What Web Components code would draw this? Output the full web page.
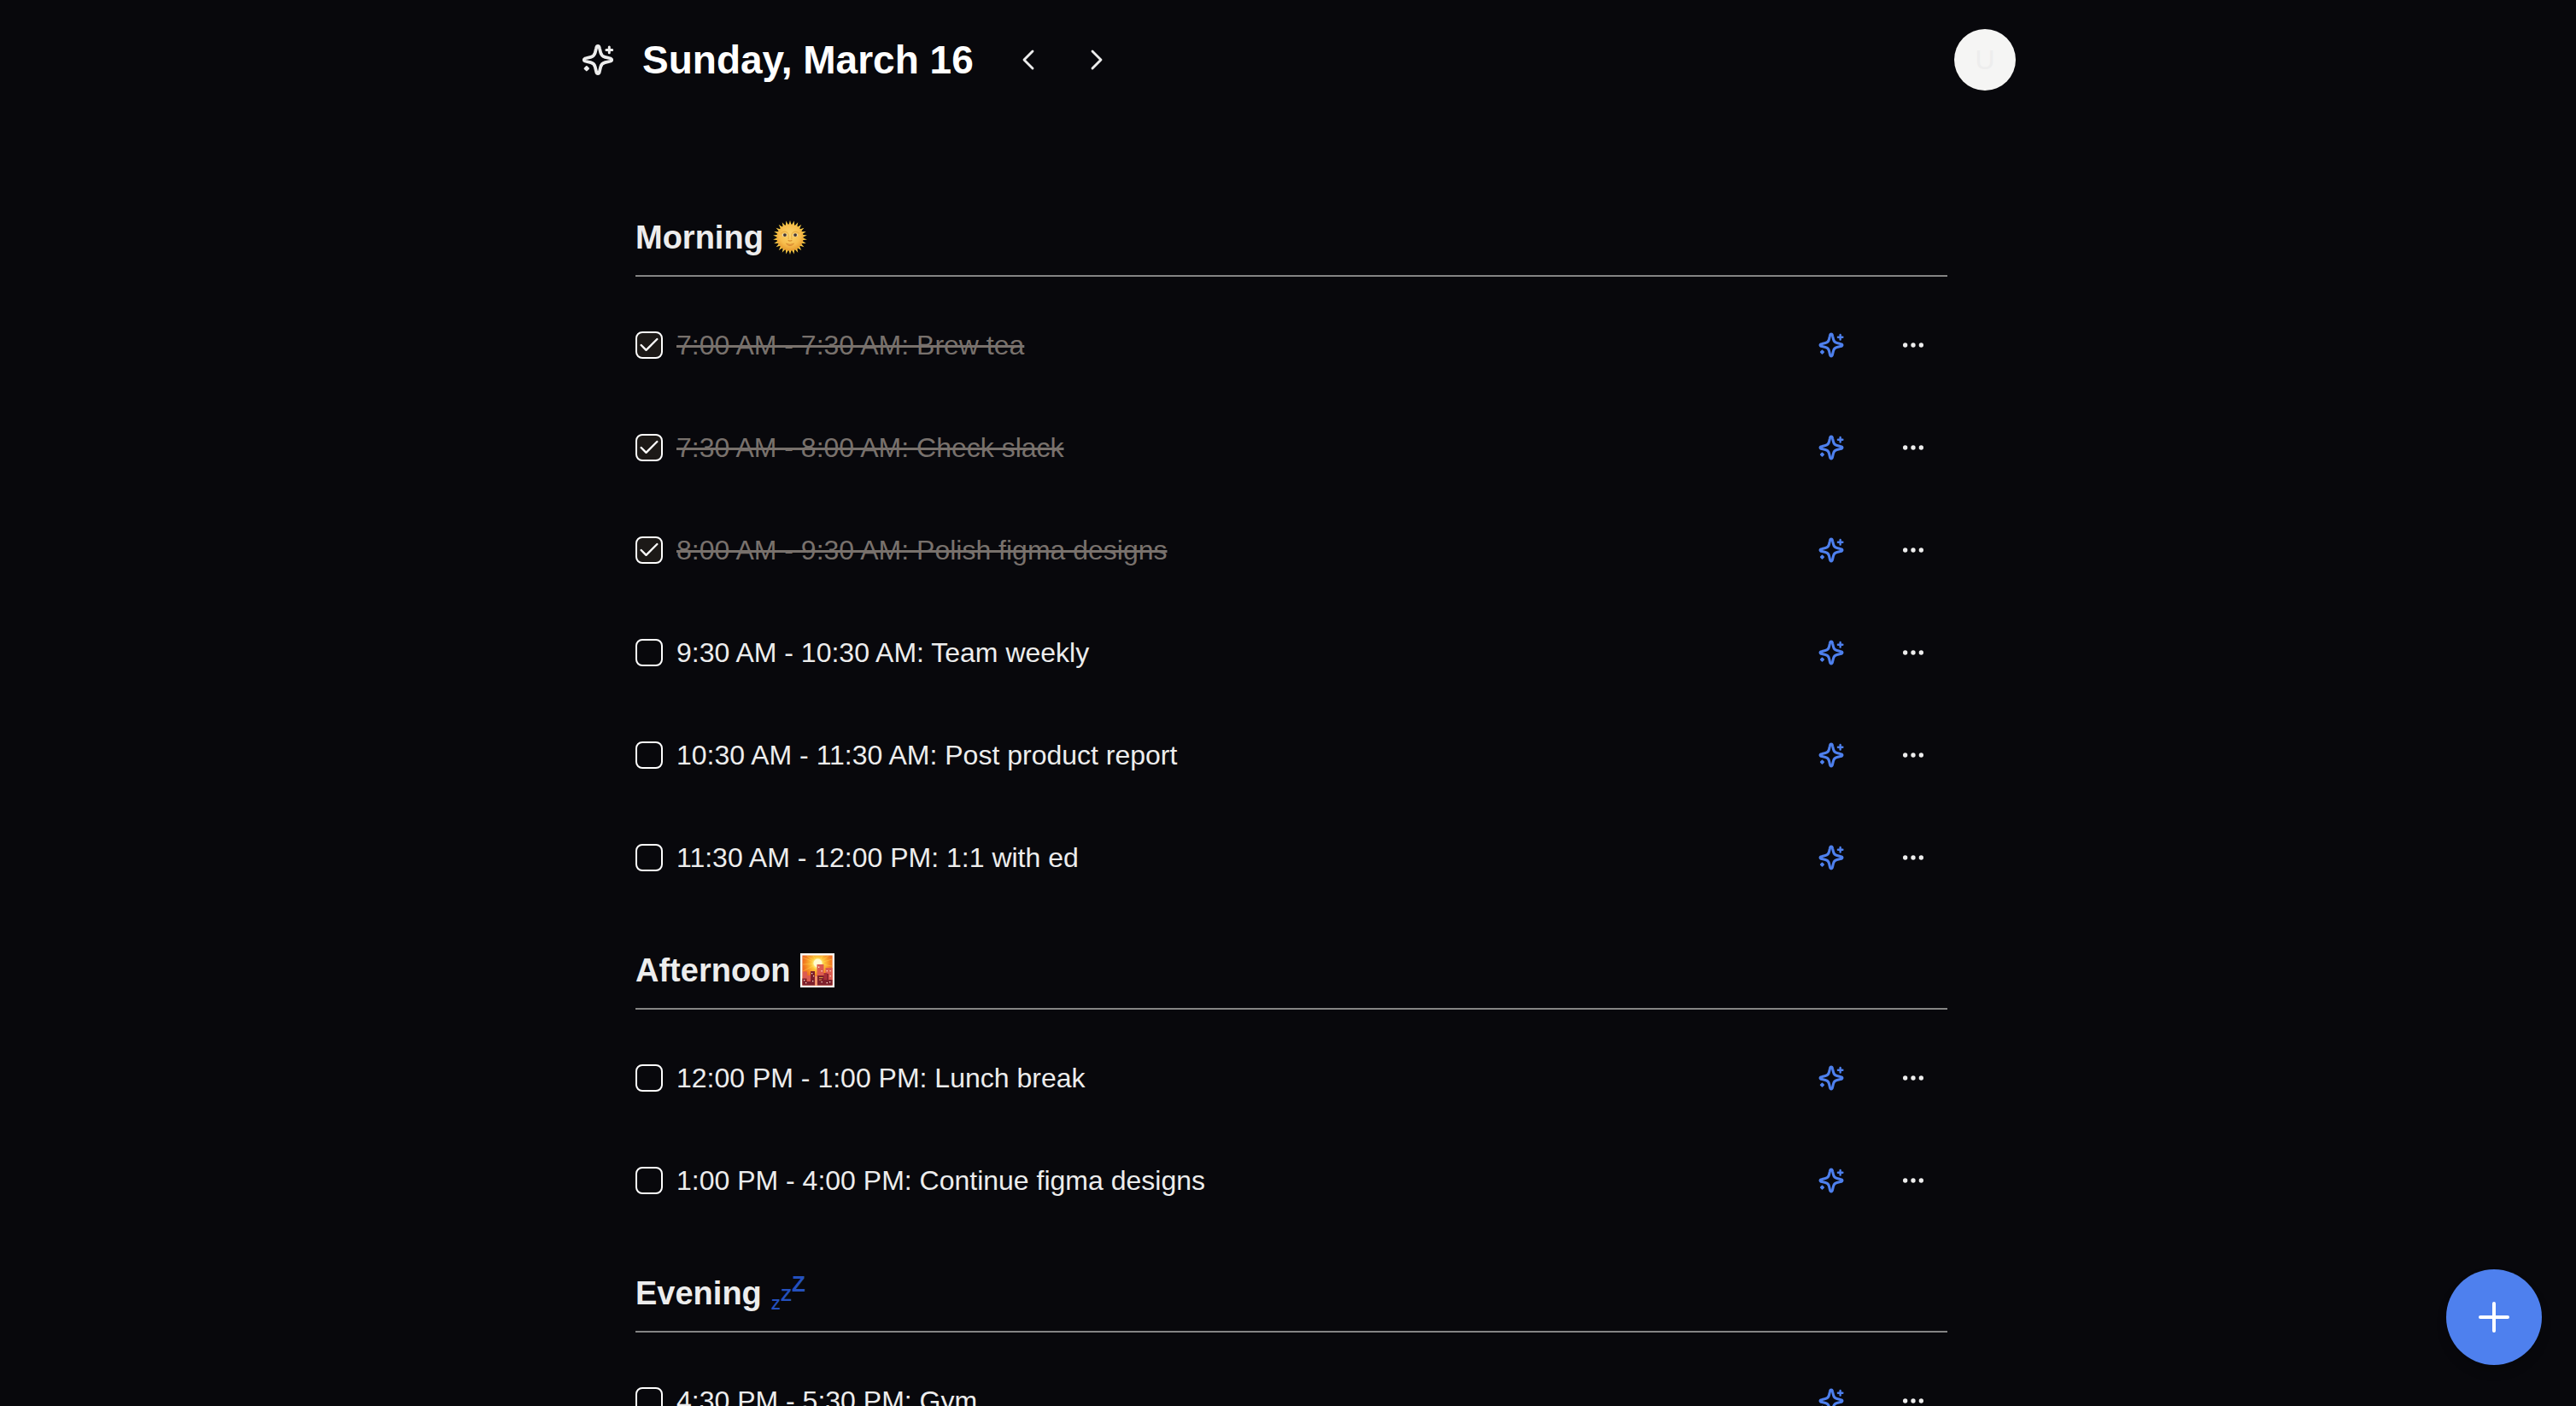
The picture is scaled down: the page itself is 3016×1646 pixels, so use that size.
<!DOCTYPE html>
<html lang="en">
<head>
<meta charset="utf-8">
<meta name="viewport" content="width=device-width, initial-scale=1">
<title>Day planner</title>
<style>
  html, body { margin: 0; height: 100%; }
  body {
    background: #08080c;
    color: #ededed;
    font-family: "Liberation Sans", Arial, sans-serif;
    overflow: hidden;
  }
</style>
</head>
<body>
<day-planner>
  <day-header slot="header">Sunday, March 16</day-header>
  <day-section>
    <span slot="title">Morning</span><day-emoji slot="emoji" name="sun"></day-emoji>
    <task-item done>7:00 AM - 7:30 AM: Brew tea</task-item>
    <task-item done>7:30 AM - 8:00 AM: Check slack</task-item>
    <task-item done>8:00 AM - 9:30 AM: Polish figma designs</task-item>
    <task-item>9:30 AM - 10:30 AM: Team weekly</task-item>
    <task-item>10:30 AM - 11:30 AM: Post product report</task-item>
    <task-item>11:30 AM - 12:00 PM: 1:1 with ed</task-item>
  </day-section>
  <day-section>
    <span slot="title">Afternoon</span><day-emoji slot="emoji" name="sunset"></day-emoji>
    <task-item>12:00 PM - 1:00 PM: Lunch break</task-item>
    <task-item>1:00 PM - 4:00 PM: Continue figma designs</task-item>
  </day-section>
  <day-section>
    <span slot="title">Evening</span><day-emoji slot="emoji" name="sleep"></day-emoji>
    <task-item>4:30 PM - 5:30 PM: Gym</task-item>
  </day-section>
  <add-button slot="action"></add-button>
</day-planner>

<script>
const ICONS = {
  sparkles: ['0 0 40 40', `<path d="M20 3.8C18.8 3.8 18.3 5 18 6.6L16.8 11.6C16 14.8 14.8 16 11.6 16.8L6.6 18C5 18.3 3.8 18.8 3.8 20S5 21.7 6.6 22L11.6 23.2C14.8 24 16 25.2 16.8 28.4L18 33.4C18.3 35 18.8 36.2 20 36.2S21.7 35 22 33.4L23.2 28.4C24 25.2 25.2 24 28.4 23.2L33.4 22C35 21.7 36.2 21.2 36.2 20S35 18.3 33.4 18L28.4 16.8C25.2 16 24 14.8 23.2 11.6L22 6.6C21.7 5 21.2 3.8 20 3.8Z" fill="none" stroke="currentColor" stroke-width="3.8" stroke-linejoin="round"/><path d="M33.3 5V11.8M29.9 8.4H36.7" stroke="currentColor" stroke-width="3" stroke-linecap="round"/><path d="M6.8 28L9 30.2L6.8 32.4L4.6 30.2Z" fill="currentColor" stroke="currentColor" stroke-width="2" stroke-linejoin="round"/>`],
  left: ['0 0 24 24', '<path d="m15 18-6-6 6-6" fill="none" stroke="currentColor" stroke-width="1.7" stroke-linecap="round" stroke-linejoin="round"/>'],
  right: ['0 0 24 24', '<path d="m9 18 6-6-6-6" fill="none" stroke="currentColor" stroke-width="1.7" stroke-linecap="round" stroke-linejoin="round"/>'],
  more: ['0 0 24 24', '<g fill="currentColor"><circle cx="5" cy="12" r="2"/><circle cx="12" cy="12" r="2"/><circle cx="19" cy="12" r="2"/></g>'],
  check: ['0 0 24 24', '<path d="M20 6 9 17l-5-5" fill="none" stroke="currentColor" stroke-width="2" stroke-linecap="round" stroke-linejoin="round"/>'],
  plus: ['0 0 48 48', '<path d="M24 8V40M8 24H40" fill="none" stroke="currentColor" stroke-width="4" stroke-linecap="round"/>']
};

const rays = Array.from({ length: 26 }, (_, i) =>
  `<path d="M18.4 5.5L20 0L21.6 5.5Z" transform="rotate(${i * 360 / 26} 20 20)"/>`).join('');

const EMOJI = {
  sun: `<defs><radialGradient id="g" cx=".5" cy=".4" r=".6"><stop offset="0" stop-color="#fbd56c"/><stop offset=".65" stop-color="#f7bd4c"/><stop offset="1" stop-color="#e79a2e"/></radialGradient></defs>
    <g fill="#f8cb45">${rays}</g><circle cx="20" cy="20" r="15.6" fill="url(#g)"/>
    <path d="M9 15.5Q13 11.5 17 14.4Q18.8 16 18 22M31 15.5Q27 11.5 23 14.4Q21.2 16 22 22" fill="none" stroke="#e0a03a" stroke-width=".8"/>
    <ellipse cx="13.7" cy="17.2" rx="2.9" ry="1.9" fill="#ead9b0"/><ellipse cx="26.3" cy="17.2" rx="2.9" ry="1.9" fill="#ead9b0"/>
    <circle cx="13.9" cy="17.1" r="1.9" fill="#44362f"/><circle cx="26.1" cy="17.1" r="1.9" fill="#44362f"/>
    <path d="M17.7 23.3Q20 25 22.3 23.3" fill="none" stroke="#d98f2c" stroke-width="1.2"/>
    <path d="M15.5 27.2Q20 29.4 24.5 27.2Q20 32.2 15.5 27.2Z" fill="#f2a94a" stroke="#cf7f2a" stroke-width=".7"/>`,
  sunset: `<defs><radialGradient id="s" gradientUnits="userSpaceOnUse" cx="20.5" cy="12" r="21"><stop offset="0" stop-color="#fffbd0"/><stop offset=".2" stop-color="#fff28a"/><stop offset=".36" stop-color="#fdc43a"/><stop offset=".66" stop-color="#f58a24"/><stop offset="1" stop-color="#e8561f"/></radialGradient></defs>
    <path fill="#fbf7f2" d="M0 0H40V40H0Z"/><path fill="url(#s)" d="M2.4 2.4H37.6V37.6H2.4Z"/>
    <path d="M20.5 12L3 5M20.5 12L8 3M20.5 12L15 3M20.5 12L26 3M20.5 12L33 3M20.5 12L37 7M20.5 12L3 13M20.5 12L37 15M20.5 12L3 21" stroke="#ffe25a" stroke-opacity=".4" stroke-width="1"/>
    <circle cx="20.5" cy="11.5" r="5" fill="#fffbd0"/>
    <path fill="#dc5a50" d="M3 21.5H8V30H3ZM8 26H12V36H8ZM19.5 13H27.5V27H19.5ZM29.5 17H37.6V31H29.5Z"/>
    <path fill="#f2926a" d="M16.5 27H20V37.6H16.5Z"/>
    <path fill="#7d1f2c" d="M2.4 29.5H7.5V37.6H2.4ZM7.5 33H12V37.6H7.5ZM12 21H17V37.6H12ZM20 26H28.5V37.6H20ZM28.5 24H33V37.6H28.5ZM32 31H37.6V37.6H32Z"/>
    <path fill="#a82f38" d="M27.5 23H31.5V31H27.5Z"/>
    <path fill="#fce3c8" d="M4 31H5.3V32.3H4ZM6 34H7.3V35.3H6ZM13 23H14.3V24.3H13ZM15 26H16.2V27.3H15ZM14 32H15.3V33.3H14ZM21 15.5H22.3V17H21ZM24.5 20H25.8V21.5H24.5ZM30.6 20H32V21.3H30.6ZM34.5 20H35.8V21.3H34.5ZM34.5 26H35.8V27.3H34.5ZM30.6 34H32V35.3H30.6ZM34 33H35.3V34.3H34ZM24.5 33H25.8V34.3H24.5Z"/>
    <path d="M22 28.5H26.5M22 31H25" stroke="#d2963c" stroke-width="1"/>`,
  sleep: `<g fill="#2450bd" font-family="Liberation Sans, Arial, sans-serif" font-weight="700"><text x="0" y="39" font-size="17">Z</text><text x="11" y="29" font-size="21">Z</text><text x="24" y="18" font-size="26">Z</text></g>`
};

const BASE = `<style>
  * { box-sizing: border-box; }
  button { display: grid; place-items: center; margin: 0; padding: 0; border: 0; background: none; color: inherit; font: inherit; cursor: pointer; }
</style>`;

function define(name, html, setup) {
  const template = document.createElement('template');
  template.innerHTML = BASE + html;
  customElements.define(name, class extends HTMLElement {
    constructor() {
      super();
      this.attachShadow({ mode: 'open' }).append(template.content.cloneNode(true));
    }
    connectedCallback() { if (setup) setup(this, this.shadowRoot); }
  });
}

define('day-icon', `<style>
  :host { display: block; width: var(--icon-size, 32px); height: var(--icon-size, 32px); }
  svg { display: block; width: 100%; height: 100%; }
</style><svg aria-hidden="true"></svg>`, (host, root) => {
  const [box, shapes] = ICONS[host.getAttribute('name')];
  const svg = root.querySelector('svg');
  svg.setAttribute('viewBox', box);
  svg.innerHTML = shapes;
});

define('day-emoji', `<style>
  :host { display: block; width: 40px; height: 40px; }
  svg { display: block; width: 100%; height: 100%; overflow: visible; }
</style><svg viewBox="0 0 40 40" aria-hidden="true"></svg>`, (host, root) => {
  root.querySelector('svg').innerHTML = EMOJI[host.getAttribute('name')];
});

define('day-header', `<style>
  :host { display: block; }
  header { display: flex; align-items: center; height: 140px; max-width: 1704px; margin: 0 auto; padding-left: 24px; }
  day-icon { --icon-size: 40px; }
  h1 { margin: 0 24px 0 32px; color: #fff; font-size: 46px; line-height: 56px; font-weight: 700; white-space: nowrap; }
  nav { display: flex; }
  nav button { width: 80px; height: 80px; }
  .avatar { width: 72px; height: 72px; margin-left: auto; border-radius: 50%; background: #f5f5f4; color: #ededed; font-size: 32px; line-height: 40px; }
</style>
<header>
  <button aria-label="Plan the day"><day-icon name="sparkles"></day-icon></button>
  <h1><slot></slot></h1>
  <nav aria-label="Change day">
    <button aria-label="Previous day"><day-icon name="left"></day-icon></button>
    <button aria-label="Next day"><day-icon name="right"></day-icon></button>
  </nav>
  <button class="avatar" aria-label="Account">U</button>
</header>`);

define('day-section', `<style>
  :host { display: block; }
  h2 { display: flex; align-items: center; gap: 11px; margin: 0 0 20px; padding-bottom: 16px; border-bottom: 2px solid #848484; font-size: 38px; line-height: 56px; font-weight: 700; }
</style>
<section>
  <h2><slot name="title"></slot><slot name="emoji"></slot></h2>
  <slot></slot>
</section>`);

define('task-item', `<style>
  :host { display: flex; align-items: center; gap: 16px; height: 120px; font-size: 32px; line-height: 48px; }
  label { display: flex; align-items: center; gap: 16px; flex: 1; min-width: 0; cursor: pointer; }
  .box { display: grid; flex: none; width: 32px; height: 32px; }
  .box > * { grid-area: 1 / 1; place-self: center; }
  input { appearance: none; width: 32px; height: 32px; margin: 0; border: 2px solid #fff; border-radius: 8px; }
  .box day-icon { --icon-size: 28px; color: #fff; visibility: hidden; pointer-events: none; }
  input:checked { background: #1c1917; }
  input:checked + day-icon { visibility: visible; }
  .box:has(:checked) + .text { color: #78716c; text-decoration: line-through; text-decoration-thickness: 3px; }
  button { width: 80px; height: 80px; }
  .assist { color: #4e80ee; }
</style>
<label>
  <span class="box"><input type="checkbox"><day-icon name="check"></day-icon></span>
  <span class="text"><slot></slot></span>
</label>
<button class="assist" aria-label="Get help with task"><day-icon name="sparkles"></day-icon></button>
<button aria-label="Task options"><day-icon name="more"></day-icon></button>`, (host, root) => {
  root.querySelector('input').checked = host.hasAttribute('done');
});

define('add-button', `<style>
  :host { position: fixed; right: 40px; bottom: 48px; }
  button { width: 112px; height: 112px; border-radius: 50%; background: #4e80ee; color: #fff; box-shadow: 0 8px 12px rgba(0, 0, 0, .2); }
  day-icon { --icon-size: 48px; }
</style><button aria-label="Add task"><day-icon name="plus"></day-icon></button>`);

define('day-planner', `<style>
  :host { display: block; height: 100vh; overflow-y: auto; scrollbar-width: none; }
  main { display: flex; flex-direction: column; gap: 44px; max-width: 1544px; margin: 0 auto; padding: 110px 0 0 8px; }
</style>
<slot name="header"></slot>
<main><slot></slot></main>
<slot name="action"></slot>`);
</script>
</body>
</html>
